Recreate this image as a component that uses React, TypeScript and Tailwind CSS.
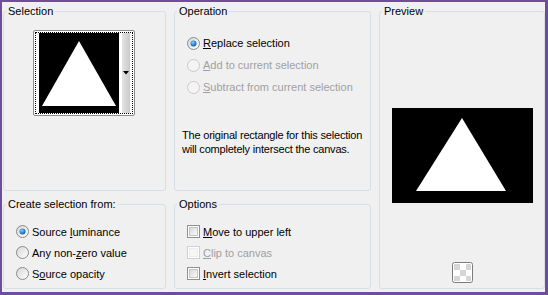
import React from "react"

const font = "font-['Liberation_Sans',Arial,sans-serif] text-[11px] leading-[14px]"

function Radio({ checked, disabled }: { checked?: boolean; disabled?: boolean }) {
  return (
    <svg width="13" height="13" viewBox="0 0 13 13" className="shrink-0">
      <defs>
        <linearGradient id="rfill" x1="0" y1="0" x2="1" y2="1">
          <stop offset="0" stopColor="#d6d6d6" />
          <stop offset="1" stopColor="#ffffff" />
        </linearGradient>
        <radialGradient id="rdot" cx="0.4" cy="0.35" r="0.7">
          <stop offset="0" stopColor="#7fd0ff" />
          <stop offset="0.6" stopColor="#2a86cf" />
          <stop offset="1" stopColor="#1b4f8f" />
        </radialGradient>
      </defs>
      <circle
        cx="6.5"
        cy="6.5"
        r="6"
        fill={disabled ? "#f4f4f4" : "url(#rfill)"}
        stroke={disabled ? "#c9c9c9" : "#8a8a8a"}
      />
      {checked && <circle cx="6.5" cy="6.5" r="3" fill="url(#rdot)" />}
    </svg>
  )
}

function Check({ disabled }: { disabled?: boolean }) {
  return (
    <svg width="13" height="13" viewBox="0 0 13 13" className="shrink-0">
      <defs>
        <linearGradient id="cfill" x1="0" y1="0" x2="1" y2="1">
          <stop offset="0" stopColor="#d8d8d8" />
          <stop offset="1" stopColor="#fbfbfb" />
        </linearGradient>
      </defs>
      <rect x="0.5" y="0.5" width="12" height="12" fill="#fff" stroke={disabled ? "#cfcfcf" : "#8e8f8f"} />
      <rect x="2.5" y="2.5" width="8" height="8" fill={disabled ? "#f6f6f6" : "url(#cfill)"} stroke={disabled ? "#ececec" : "#c4c4c4"} />
    </svg>
  )
}

function Group({ title, children, className = "" }: { title: string; children?: React.ReactNode; className?: string }) {
  return (
    <fieldset className={`border border-[#d5dfe5] rounded-[3px] min-w-0 ${className}`}>
      <legend className="ml-[2px] px-[2px] leading-[14px]">{title}</legend>
      {children}
    </fieldset>
  )
}

function Row({ children, h, disabled }: { children: React.ReactNode; h: string; disabled?: boolean }) {
  return (
    <div className={`flex items-center gap-[3px] ${h} ${disabled ? "text-[#a0a0a0]" : "text-black"}`}>{children}</div>
  )
}

function Thumb() {
  return (
    <div className="ml-[29px] mt-[12px] w-[102px] h-[86px] border border-[#8c8c8c] rounded-[2px] bg-white p-[1px]">
      <div className="h-full border border-dotted border-black flex">
        <svg width="80" height="80" viewBox="0 0 80 80" className="ml-[3px] shrink-0">
          <rect width="80" height="80" fill="#000" />
          <polygon points="40,8 77,73 3,73" fill="#fff" />
        </svg>
        <div className="ml-[3px] w-[8px] h-full bg-gradient-to-r from-[#e4e4e4] to-[#c9c9c9] flex items-center justify-center">
          <svg width="6" height="4" viewBox="0 0 6 4">
            <polygon points="0,0 6,0 3,3.5" fill="#000" />
          </svg>
        </div>
      </div>
    </div>
  )
}

function Checker() {
  return (
    <svg width="21" height="21" viewBox="0 0 21 21">
      <rect x="0.5" y="0.5" width="20" height="20" rx="2" fill="#fff" stroke="#7c7c7c" />
      <rect x="2" y="2" width="6" height="6" fill="#d6d6d6" />
      <rect x="14" y="2" width="5" height="6" fill="#d6d6d6" />
      <rect x="8" y="8" width="6" height="6" fill="#d6d6d6" />
      <rect x="2" y="14" width="6" height="5" fill="#d6d6d6" />
      <rect x="14" y="14" width="5" height="5" fill="#d6d6d6" />
    </svg>
  )
}

export default function App() {
  return (
    <div
      className={`w-[548px] h-[295px] bg-[#f0f0f0] border-l-2 border-t-2 border-r-[3px] border-b-[3px] border-[#6e4d9c] ${font} text-black`}
    >
      <div className="grid grid-cols-[163px_197px_166px] grid-rows-[187px_92px] gap-x-[8px] gap-y-[6px] pl-[1px] pt-[2px]">
        <Group title="Selection">
          <Thumb />
        </Group>

        <Group title="Operation">
          <div className="pl-[12px] mt-[14px]">
            <Row h="h-[22px]">
              <Radio checked />
              <span>
                <u>R</u>eplace selection
              </span>
            </Row>
            <Row h="h-[22px]" disabled>
              <Radio disabled />
              <span>
                <u>A</u>dd to current selection
              </span>
            </Row>
            <Row h="h-[22px]" disabled>
              <Radio disabled />
              <span>
                <u>S</u>ubtract from current selection
              </span>
            </Row>
          </div>
          <p className="ml-[7px] mt-[30px] whitespace-nowrap tracking-[-0.2px]">
            The original rectangle for this selection
            <br />
            will completely intersect the canvas.
          </p>
        </Group>

        <Group title="Preview" className="row-span-2">
          <div className="flex flex-col items-center">
            <svg width="141" height="95" viewBox="0 0 141 95" className="mt-[90px]">
              <rect width="141" height="95" fill="#000" />
              <polygon points="70,10 114,83 24,83" fill="#fff" />
            </svg>
            <div className="mt-[59px]">
              <Checker />
            </div>
          </div>
        </Group>

        <Group title="Create selection from:">
          <div className="pl-[12px] mt-[10px]">
            <Row h="h-[21px]">
              <Radio checked />
              <span>
                Source <u>l</u>uminance
              </span>
            </Row>
            <Row h="h-[21px]">
              <Radio />
              <span>
                Any non-<u>z</u>ero value
              </span>
            </Row>
            <Row h="h-[21px]">
              <Radio />
              <span>
                S<u>o</u>urce opacity
              </span>
            </Row>
          </div>
        </Group>

        <Group title="Options">
          <div className="pl-[12px] mt-[10px]">
            <Row h="h-[21px]">
              <Check />
              <span>
                <u>M</u>ove to upper left
              </span>
            </Row>
            <Row h="h-[21px]" disabled>
              <Check disabled />
              <span>
                <u>C</u>lip to canvas
              </span>
            </Row>
            <Row h="h-[21px]">
              <Check />
              <span>
                <u>I</u>nvert selection
              </span>
            </Row>
          </div>
        </Group>
      </div>
    </div>
  )
}
